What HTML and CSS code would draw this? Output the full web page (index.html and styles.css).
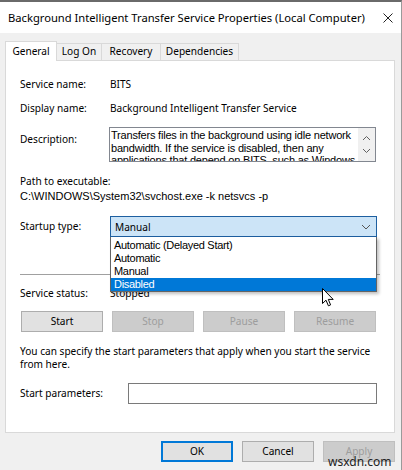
FILE: index.html
```html
<!DOCTYPE html>
<html>
<head>
<meta charset="utf-8">
<link rel="stylesheet" href="styles.css">
</head>
<body>
<div class="window">
  <div class="titlebar">
    <span class="title">Background Intelligent Transfer Service Properties (Local Computer)</span>
    <svg class="close" width="10" height="10" viewBox="0 0 10 10"><path d="M0.5 0.5L9.5 9.5M9.5 0.5L0.5 9.5" stroke="#222" stroke-width="1" fill="none"/></svg>
  </div>
  <div class="body">
    <div class="tabs">
      <div class="tab active t1">General</div>
      <div class="tab t2">Log On</div>
      <div class="tab t3">Recovery</div>
      <div class="tab t4">Dependencies</div>
    </div>
    <div class="panel">
      <div class="row r1"><span class="label">Service name:</span><span class="value">BITS</span></div>
      <div class="row r2"><span class="label">Display name:</span><span class="value">Background Intelligent Transfer Service</span></div>
      <div class="row r3">
        <span class="label desc-label">Description:</span>
        <div class="descbox">
          <div class="desctext">Transfers files in the background using idle network bandwidth. If the service is disabled, then any applications that depend on BITS, such as Windows Update or MSN Explorer, will be unable to automatically download programs and other information.</div>
          <div class="scroll">
            <svg width="9" height="6" viewBox="0 0 9 6"><path d="M1 5L4.5 1.5L8 5" stroke="#606060" fill="none"/></svg>
            <svg width="9" height="6" viewBox="0 0 9 6"><path d="M1 1L4.5 4.5L8 1" stroke="#606060" fill="none"/></svg>
          </div>
        </div>
      </div>
      <div class="path-label">Path to executable:</div>
      <div class="path">C:\WINDOWS\System32\svchost.exe -k netsvcs -p</div>
      <div class="row r4">
        <span class="label">Startup type:</span>
        <div class="combo-wrap">
          <div class="combo">
            <span>Manual</span>
            <svg width="10" height="6" viewBox="0 0 10 6"><path d="M1 1L5 5L9 1" stroke="#555" fill="none"/></svg>
          </div>
          <div class="dropdown">
            <div class="opt">Automatic (Delayed Start)</div>
            <div class="opt">Automatic</div>
            <div class="opt">Manual</div>
            <div class="opt sel">Disabled</div>
          </div>
        </div>
      </div>
      <div class="sep"></div>
      <div class="row r5"><span class="label">Service status:</span><span class="value">Stopped</span></div>
      <div class="btnrow">
        <div class="btn">Start</div>
        <div class="btn disabled">Stop</div>
        <div class="btn disabled">Pause</div>
        <div class="btn disabled">Resume</div>
      </div>
      <p class="note">You can specify the start parameters that apply when you start the service from here.</p>
      <div class="row r6">
        <span class="label">Start parameters:</span>
        <div class="input"></div>
      </div>
    </div>
    <div class="footer">
      <div class="btn fbtn default">OK</div>
      <div class="btn fbtn">Cancel</div>
      <div class="btn fbtn disabled">Apply</div>
    </div>
  </div>
  <svg class="cursor" width="12" height="19" viewBox="0 0 12 19"><path d="M0.5 0.5V15.5L4 12.2L6.4 17.8L8.6 16.9L6.3 11.4H11.2Z" fill="#fff" stroke="#000" stroke-width="1" stroke-linejoin="round"/></svg>
  <div class="watermark">wsxdn.com</div>
</div>
</body>
</html>
```
FILE: styles.css
```css
* { box-sizing: border-box; }
html, body { margin: 0; padding: 0; }
body {
  font-family: "Noto Sans", "Open Sans", sans-serif;
  font-size: 10.1px;
  color: #000;
  background: #f0f0f0;
}
.window {
  position: relative;
  width: 402px;
  height: 470px;
  border-top: 2px solid #6a6a6a;
  border-right: 1px solid #9a9a9a;
  background: #f0f0f0;
  overflow: hidden;
}
.titlebar {
  height: 31px;
  background: #fff;
  display: flex;
  align-items: center;
  justify-content: space-between;
  padding: 0 8px 0 8px;
}
.title {
  font-size: 11.2px;
  color: #000;
  white-space: nowrap;
}
.body { padding: 8px 6px 0 5px; }
.tabs {
  display: flex;
  align-items: flex-end;
  height: 19px;
  position: relative;
  z-index: 1;
}
.tab {
  height: 17px;
  border: 1px solid #d9d9d9;
  border-bottom: none;
  border-left: none;
  background: #f0f0f0;
  text-align: center;
  line-height: 15px;
  white-space: nowrap;
}
.tab.active {
  height: 20px;
  margin-bottom: -1px;
  background: #fff;
  border-left: 1px solid #d9d9d9;
  line-height: 18px;
}
.t1 { width: 52px; }
.t2 { width: 45px; }
.t3 { width: 59px; }
.t4 { width: 78px; }
.panel {
  height: 373px;
  border: 1px solid #d9d9d9;
  background: #fff;
  padding: 16px 17px 0 14px;
}
.row { display: flex; align-items: center; }
.label { width: 90px; flex: none; line-height: 15px; }
.value { line-height: 15px; }
.r2 { margin-top: 9px; }
.r3 { margin-top: 11px; align-items: flex-start; }
.desc-label { padding-top: 5px; width: 89px; }
.descbox {
  width: 267px;
  height: 35px;
  border: 1px solid #828790;
  display: flex;
  overflow: hidden;
}
.desctext {
  flex: 1;
  font-family: "Liberation Sans", Arial, sans-serif;
  font-size: 11px;
  letter-spacing: -0.2px;
  line-height: 12.5px;
  padding: 1px 0 0 1px;
  height: 33px;
  overflow: hidden;
}
.scroll {
  width: 17px;
  flex: none;
  background: #f0f0f0;
  display: flex;
  flex-direction: column;
  align-items: center;
  justify-content: space-around;
  padding: 3px 0;
}
.path-label { margin-top: 12px; line-height: 15px; }
.path {
  line-height: 15px;
  font-family: "Liberation Sans", Arial, sans-serif;
  font-size: 11px;
}
.r4 { margin-top: 12px; }
.combo-wrap { position: relative; }
.combo {
  width: 267px;
  height: 21px;
  border: 1px solid #1d5fa0;
  background: #cce4f7;
  display: flex;
  align-items: center;
  justify-content: space-between;
  padding: 0 5px 0 4px;
}
.dropdown {
  position: absolute;
  left: 0;
  top: 21px;
  width: 267px;
  background: #fff;
  border: 1px solid #646464;
  border-top: none;
  box-shadow: 2px 2px 3px rgba(0,0,0,0.25);
  font-family: "Liberation Sans", Arial, sans-serif;
  font-size: 11px;
  letter-spacing: -0.3px;
  z-index: 2;
  padding-top: 2px;
}
.opt { height: 13px; line-height: 13px; padding-left: 3px; }
.opt.sel { background: #0078d7; color: #fff; }
.sep { margin-top: 37px; height: 1px; background: #a0a0a0; margin-right: -3px; }
.r5 { margin-top: 11px; }
.btnrow {
  margin: 10px 0 0 1px;
  display: grid;
  grid-template-columns: repeat(4, 82px);
  column-gap: 9px;
}
.btn {
  height: 21px;
  border: 1px solid #adadad;
  background: #e1e1e1;
  text-align: center;
  line-height: 19px;
}
.btn.disabled { background: #cccccc; border-color: #bfbfbf; color: #9d9d9d; }
.note { margin: 13px 0 0 0; line-height: 12.5px; }
.r6 { margin-top: 13px; }
.r6 .label { width: 108px; }
.input { width: 249px; height: 21px; border: 1px solid #7a7a7a; background: #fff; }
.footer {
  display: flex;
  justify-content: flex-end;
  gap: 9px;
  margin-top: 8px;
}
.fbtn { width: 72px; }
.fbtn.default { border: 2px solid #0078d7; line-height: 17px; }
.cursor { position: absolute; left: 322px; top: 286px; z-index: 5; }
.watermark {
  position: absolute;
  left: 328px;
  top: 451px;
  font-size: 12px;
  color: #222;
  z-index: 5;
}
```
